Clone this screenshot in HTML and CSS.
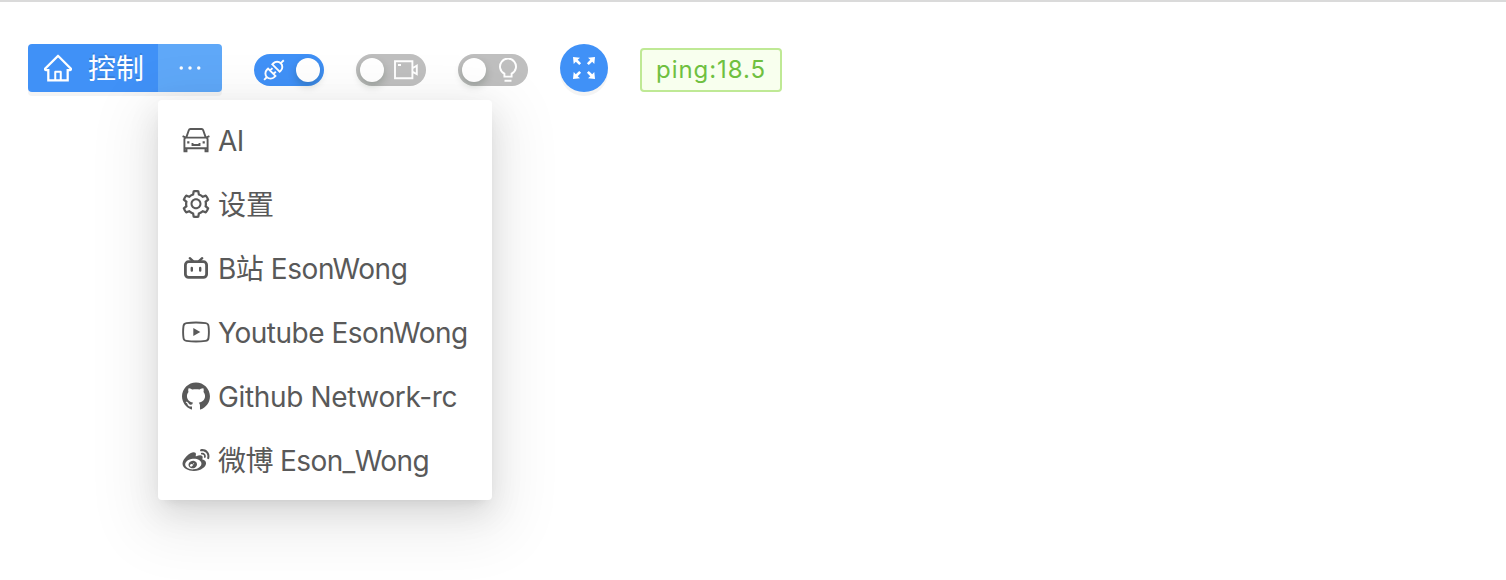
FILE: index.html
```html
<!DOCTYPE html>
<html lang="zh-CN">
<head>
<meta charset="utf-8">
<title>Network-rc</title>
<link rel="stylesheet" href="styles.css">
</head>
<body>
<header class="toolbar">
  <div class="button-group">
    <button class="btn btn-main">
      <svg class="icon" viewBox="64 64 896 896"><path d="M946.5 505L560.1 118.8l-25.9-25.9a31.5 31.5 0 0 0-44.4 0L77.5 505a63.9 63.9 0 0 0-18.8 46c.4 35.2 29.7 63.3 64.9 63.3h42.5V940h691.8V614.3h43.4c17.1 0 33.2-6.7 45.3-18.8a63.6 63.6 0 0 0 18.7-45.3c0-17-6.7-33.1-18.8-45.2zM568 868H456V664h112v204zm217.9-325.7V868H632V640c0-22.1-17.9-40-40-40H432c-22.1 0-40 17.9-40 40v228H238.1V542.3h-96l370-369.7 23.1 23.1L882 542.3h-96.1z"/></svg>
      <span class="btn-label">控制</span>
    </button>
    <div class="dropdown">
      <button class="btn btn-more" aria-label="more">
        <svg class="icon" viewBox="64 64 896 896"><circle cx="232" cy="511" r="56"/><circle cx="512" cy="511" r="56"/><circle cx="792" cy="511" r="56"/></svg>
      </button>
      <ul class="menu">
        <li class="menu-item">
          <svg class="icon line" viewBox="0 0 28 28"><path d="M4.3 11.4 6.8 4.2Q7.2 3 8.4 3h11.2q1.2 0 1.6 1.2l2.5 7.2M.6 10.2l2.7 1.2M27.4 10.2l-2.7 1.2M2.4 25V13.4q0-1.8 2-1.8h19.2q2 0 2 1.8V25M2.4 22.2h23.2M1.5 25.2h3v-3M26.5 25.2h-3v-3M10.5 17v2h7v-2"/><path class="solid" d="M5.2 15.2h2.2v2.2H5.2zM20.6 15.2h2.2v2.2h-2.2z"/></svg>
          <span class="label label-ai">AI</span>
        </li>
        <li class="menu-item">
          <svg class="icon" viewBox="64 64 896 896"><path d="M924.8 625.7l-65.5-56c3.1-19 4.7-38.4 4.7-57.8s-1.6-38.8-4.7-57.8l65.5-56a32.03 32.03 0 0 0 9.3-35.2l-.9-2.6a443.74 443.74 0 0 0-79.7-137.9l-1.8-2.1a32.12 32.12 0 0 0-35.1-9.5l-81.3 28.9c-30-24.6-63.5-44-99.7-57.6l-15.7-85a32.05 32.05 0 0 0-25.8-25.7l-2.7-.5c-52.1-9.4-106.9-9.4-159 0l-2.7.5a32.05 32.05 0 0 0-25.8 25.7l-15.8 85.4a351.86 351.86 0 0 0-99 57.4l-81.9-29.1a32 32 0 0 0-35.1 9.5l-1.8 2.1a446.02 446.02 0 0 0-79.7 137.9l-.9 2.6c-4.5 12.5-.8 26.5 9.3 35.2l66.3 56.6c-3.1 18.8-4.6 38-4.6 57.1 0 19.2 1.5 38.4 4.6 57.1L99 625.5a32.03 32.03 0 0 0-9.3 35.2l.9 2.6c18.1 50.4 44.9 96.9 79.7 137.9l1.8 2.1a32.12 32.12 0 0 0 35.1 9.5l81.9-29.1c29.8 24.5 63.1 43.9 99 57.4l15.8 85.4a32.05 32.05 0 0 0 25.8 25.7l2.7.5a449.4 449.4 0 0 0 159 0l2.7-.5a32.05 32.05 0 0 0 25.8-25.7l15.7-85a350 350 0 0 0 99.7-57.6l81.3 28.9a32 32 0 0 0 35.1-9.5l1.8-2.1c34.8-41.1 61.6-87.5 79.7-137.9l.9-2.6c4.5-12.3.8-26.3-9.3-35zM788.3 465.9c2.5 15.1 3.8 30.6 3.8 46.1s-1.3 31-3.8 46.1l-6.6 40.1 74.7 63.9a370.03 370.03 0 0 1-42.6 73.6L721 702.8l-31.4 25.8c-23.9 19.6-50.5 35-79.3 45.8l-38.1 14.3-17.9 97a377.5 377.5 0 0 1-85 0l-17.9-97.2-37.8-14.5c-28.5-10.8-55-26.2-78.7-45.7l-31.4-25.9-93.4 33.2c-17-22.9-31.2-47.6-42.6-73.6l75.5-64.5-6.5-40c-2.4-14.9-3.7-30.3-3.7-45.5 0-15.3 1.2-30.6 3.7-45.5l6.5-40-75.5-64.5c11.3-26.1 25.6-50.7 42.6-73.6l93.4 33.2 31.4-25.9c23.7-19.5 50.2-34.9 78.7-45.7l37.9-14.3 17.9-97.2c28.1-3.2 56.8-3.2 85 0l17.9 97 38.1 14.3c28.7 10.8 55.4 26.2 79.3 45.8l31.4 25.8 92.8-32.9c17 22.9 31.2 47.6 42.6 73.6L781.8 426l6.5 39.9zM512 326c-97.2 0-176 78.8-176 176s78.8 176 176 176 176-78.8 176-176-78.8-176-176-176zm79.2 255.2A111.6 111.6 0 0 1 512 614c-29.9 0-58-11.7-79.2-32.8A111.6 111.6 0 0 1 400 502c0-29.9 11.7-58 32.8-79.2C454 401.6 482.1 390 512 390c29.9 0 58 11.6 79.2 32.8A111.6 111.6 0 0 1 624 502c0 29.9-11.7 58-32.8 79.2z"/></svg>
          <span class="label">设置</span>
        </li>
        <li class="menu-item">
          <svg class="icon line bold" viewBox="0 0 28 28"><rect x="3.4" y="7.7" width="21.2" height="15.7" rx="3.2"/><path d="M7.8 4.2l3.2 3M20.2 4.2l-3.2 3M9.8 14v2.6M18.2 14v2.6" stroke-linecap="round" stroke-width="2.4"/></svg>
          <span class="label label-b">B站 EsonWong</span>
        </li>
        <li class="menu-item">
          <svg class="icon line" viewBox="0 0 28 28"><path d="M4.4 5.1Q14 4 23.6 5.1 26.2 5.4 26.5 8 27.3 14 26.5 20 26.2 22.6 23.6 22.9 14 24 4.4 22.9 1.8 22.6 1.5 20 .7 14 1.5 8 1.8 5.4 4.4 5.1z"/><path d="M11.3 9.9l7 4.1-7 4.1z" class="solid"/></svg>
          <span class="label label-y">Youtube EsonWong</span>
        </li>
        <li class="menu-item">
          <svg class="icon" viewBox="64 64 896 896"><path d="M511.6 76.3C264.3 76.2 64 276.4 64 523.5 64 718.9 189.3 885 363.8 946c23.5 5.9 19.9-10.8 19.9-22.2v-77.5c-135.7 15.9-141.2-73.9-150.3-88.9C215 726 171.5 718 184.5 703c30.9-15.9 62.4 4 98.9 57.9 26.4 39.1 77.9 32.5 104 26 5.7-23.5 17.9-44.5 34.7-60.8-140.6-25.2-199.2-111-199.2-213 0-49.5 16.3-95 48.3-131.7-20.4-60.5 1.9-112.3 4.9-120 58.1-5.2 118.5 41.6 123.2 45.3 33-8.9 70.7-13.6 112.9-13.6 42.4 0 80.2 4.9 113.5 13.9 11.3-8.6 67.3-48.8 121.3-43.9 2.9 7.7 24.7 58.3 5.5 118 32.4 36.8 48.9 82.7 48.9 132.3 0 102.2-59 188.1-200 212.9a127.5 127.5 0 0 1 38.1 91v112.5c.8 9 0 17.9 15 17.9 177.1-59.7 304.6-227 304.6-424.1 0-247.2-200.4-447.3-447.5-447.3z"/></svg>
          <span class="label label-g">Github Network-rc</span>
        </li>
        <li class="menu-item">
          <svg class="icon" viewBox="64 64 896 896"><path d="M457.3 543c-68.1-17.7-145 16.2-174.6 76.2-30.1 61.2-1 129.1 67.8 151.3 71.2 23 155.2-12.2 184.4-78.3 28.7-64.6-7.2-131-77.6-149.2zm-52 156.2c-13.8 22.1-43.5 31.7-65.8 21.6-22-10-28.5-35.7-14.6-57.2 13.7-21.4 42.3-31 64.4-21.7 22.4 9.5 29.6 35 16 57.3zm45.5-58.5c-5 8.6-16.1 12.7-24.7 9.1-8.5-3.5-11.2-13.1-6.4-21.5 5-8.4 15.6-12.4 24.1-9.1 8.7 3.2 11.8 12.9 7 21.5zm334.5-197.2c15 4.8 31-3.4 35.9-18.3 11.8-36.6 4.4-78.4-23.2-109a111.39 111.39 0 0 0-106-34.3 28.45 28.45 0 0 0-21.9 33.8 28.39 28.39 0 0 0 33.8 21.8c18.4-3.9 38.3 1.8 51.9 16.7a54.2 54.2 0 0 1 11.3 53.3 28.45 28.45 0 0 0 18.2 36zm99.8-206c-56.7-62.9-140.4-86.9-217.7-70.5a32.98 32.98 0 0 0-25.4 39.3 33.12 33.12 0 0 0 39.3 25.5c55-11.7 114.4 5.4 154.8 50.1 40.3 44.7 51.2 105.7 34 159.1-5.6 17.4 3.9 36 21.3 41.7 17.4 5.6 36-3.9 41.6-21.2v-.1c24.1-75.4 8.9-161.1-47.9-223.9zM729 499c-12.2-3.6-20.5-6.1-14.1-22.1 13.8-34.7 15.2-64.7.3-86-28-40.1-104.8-37.9-192.8-1.1 0 0-27.6 12.1-20.6-9.8 13.5-43.5 11.5-79.9-9.6-101-47.7-47.8-174.6 1.8-283.5 110.6C127.3 471.1 80 557.5 80 632.2 80 775.1 263.2 862 442.5 862c235 0 391.3-136.5 391.3-245 0-65.5-55.2-102.6-104.8-118zM443 810.8c-143 14.1-266.5-50.5-275.8-144.5-9.3-93.9 99.2-181.5 242.2-195.6 143-14.2 266.5 50.5 275.8 144.4C694.4 709 586 796.6 443 810.8z"/></svg>
          <span class="label label-w">微博 Eson_Wong</span>
        </li>
      </ul>
    </div>
  </div>
  <div class="switch switch-on">
    <svg class="switch-icon line" viewBox="0 0 24 24"><g transform="translate(12 12) rotate(-45)"><path d="M-14 0h3.4M-3.2-5.2h-1.6a5.2 5.2 0 0 0-5.2 5.2 5.2 5.2 0 0 0 5.2 5.2h1.6zM-3.2-2.4h3.4M-3.2 2.4h3.4M2.8-5.2h1.6A5.2 5.2 0 0 1 9.6 0a5.2 5.2 0 0 1-5.2 5.2H2.8zM10 0h3.8"/></g></svg>
    <span class="knob"></span>
  </div>
  <div class="switch">
    <span class="knob"></span>
    <svg class="switch-icon wide line" viewBox="0 0 26 24"><path d="M2 3.3h17.4v17H2zM5 7h3M19.4 10.2l4.4-2.6v8.6l-4.4-2.6"/></svg>
  </div>
  <div class="switch">
    <span class="knob"></span>
    <svg class="switch-icon bulb line" viewBox="0 0 24 24"><path d="M8.4 18.6v-2.9A8 8 0 1 1 15.6 15.7v2.9zM8.5 22.7h7"/></svg>
  </div>
  <button class="round-btn" aria-label="fullscreen">
    <svg class="expand" viewBox="0 0 24 24"><path id="arrow" d="M1 1l7 .7-2.3 2.1 3.4 3.4-1.9 1.9-3.4-3.4L1.7 8z"/><use href="#arrow" transform="rotate(90 12 12)"/><use href="#arrow" transform="rotate(180 12 12)"/><use href="#arrow" transform="rotate(270 12 12)"/></svg>
  </button>
  <span class="tag"><span class="tag-text">ping:18.5</span></span>
</header>
</body>
</html>
```
FILE: styles.css
```css
* { box-sizing: border-box; }
body {
  margin: 0;
  height: 580px;
  overflow: hidden;
  background: #fff;
  border-top: 2px solid #dadada;
  font-family: Inter, "Noto Sans CJK SC", sans-serif;
  font-size: 28px;
  color: #595959;
}
.toolbar {
  display: flex;
  align-items: center;
  gap: 32px;
  height: 48px;
  margin: 42px 28px 0;
}
.button-group { display: flex; box-shadow: 0 4px 0 rgba(0, 0, 0, .045); border-radius: 4px; }
.btn {
  display: flex;
  align-items: center;
  height: 48px;
  border: 0;
  padding: 0;
  color: #fff;
  font: inherit;
}
.btn-main {
  width: 130px;
  padding-left: 16px;
  gap: 16px;
  background: #4091f7;
  border-radius: 4px 0 0 4px;
}
.btn-label { padding-top: 2px; line-height: 40px; text-shadow: 0 -2px 0 rgba(0, 0, 0, .12); }
.btn-more {
  width: 64px;
  justify-content: center;
  background: #5fa8f8;
  border-radius: 0 4px 4px 0;
}
.icon { width: 28px; height: 28px; flex: none; fill: currentColor; }
.line { fill: none; stroke: currentColor; stroke-width: 1.9; }
.bold { stroke-width: 2.8; }
.solid { fill: currentColor; stroke: none; }
.dropdown { position: relative; }
.menu {
  position: absolute;
  top: 56px;
  left: 0;
  width: 334px;
  margin: 0;
  padding: 8px 0;
  list-style: none;
  background: #fff;
  border-radius: 4px;
  box-shadow: 0 6px 12px -8px rgba(0, 0, 0, .14), 0 12px 32px rgba(0, 0, 0, .1), 0 18px 60px 18px rgba(0, 0, 0, .065);
}
.menu-item {
  display: flex;
  align-items: center;
  gap: 8px;
  height: 64px;
  padding: 0 24px;
  white-space: nowrap;
}
.label { line-height: 42px; padding-top: 2px; }
.label-ai { letter-spacing: -.6px; }
.label-b { letter-spacing: -.45px; }
.label-y { letter-spacing: -.48px; }
.label-g { letter-spacing: -.36px; }
.label-w { letter-spacing: -.6px; }
.switch {
  display: flex;
  align-items: center;
  justify-content: space-between;
  width: 70px;
  height: 32px;
  margin-top: 4px;
  padding: 0 4px;
  border-radius: 16px;
  background: #bfbfbf;
  color: #fff;
}
.switch-on { background: #4091f7; }
.knob {
  width: 24px;
  height: 24px;
  border-radius: 50%;
  background: #fff;
  box-shadow: 0 4px 8px rgba(0, 35, 11, .2);
}
.switch-icon { width: 24px; height: 24px; margin-left: 4px; }
.wide { width: 26px; margin-right: 3px; }
.bulb { margin-right: 4px; }
.round-btn {
  display: grid;
  place-items: center;
  width: 48px;
  height: 48px;
  padding: 0;
  border: 0;
  border-radius: 50%;
  background: #4091f7;
  box-shadow: 0 4px 0 rgba(0, 0, 0, .045);
}
.expand { width: 24px; height: 24px; fill: #fff; }
.tag {
  display: flex;
  align-items: center;
  width: 142px;
  height: 44px;
  margin-top: 4px;
  padding-left: 14px;
  border: 2px solid #bfe995;
  border-radius: 4px;
  background: #f8ffee;
  color: #6fc040;
  font-size: 24px;
}
.tag-text { padding-bottom: 1px; letter-spacing: .95px; }
```
